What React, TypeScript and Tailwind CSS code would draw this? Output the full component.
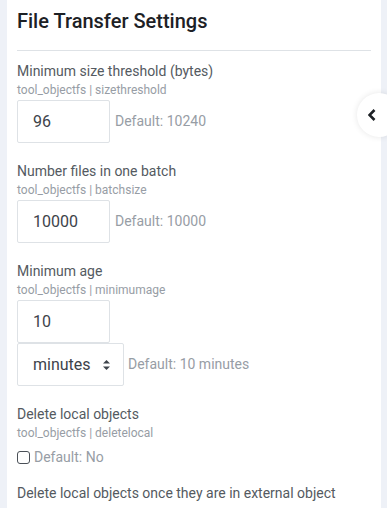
export default function App() {
  return (
    <div className="relative h-[508px] w-full overflow-hidden bg-[#eef1f7] font-['Roboto',sans-serif]">
      <div className="ml-[7px] h-full w-[374px] bg-white px-[10px]">
        <h2 className="pt-[6px] text-[20px] leading-[30px] font-medium text-[#1d2125]">
          File Transfer Settings
        </h2>
        <hr className="mt-[14px] border-t border-[#dee2e6]" />

        <div className="mt-[10px]">
          <div className="text-[14px] leading-[20px] text-[#545a61]">Minimum size threshold (bytes)</div>
          <div className="text-[12px] leading-[18px] text-[#979da5]">tool_objectfs | sizethreshold</div>
          <div className="mt-[1px] flex items-center gap-[5px]">
            <div className="flex h-[43px] w-[93px] items-center rounded-[2px] border border-[#dee2e6] px-[15px] text-[16px] text-[#3d434a]">
              96
            </div>
            <span className="text-[14px] text-[#979da5]">Default: 10240</span>
          </div>
        </div>

        <div className="mt-[18px]">
          <div className="text-[14px] leading-[20px] text-[#545a61]">Number files in one batch</div>
          <div className="text-[12px] leading-[18px] text-[#979da5]">tool_objectfs | batchsize</div>
          <div className="mt-[1px] flex items-center gap-[5px]">
            <div className="flex h-[43px] w-[93px] items-center rounded-[2px] border border-[#dee2e6] px-[15px] text-[16px] text-[#3d434a]">
              10000
            </div>
            <span className="text-[14px] text-[#979da5]">Default: 10000</span>
          </div>
        </div>

        <div className="mt-[18px]">
          <div className="text-[14px] leading-[20px] text-[#545a61]">Minimum age</div>
          <div className="text-[12px] leading-[18px] text-[#979da5]">tool_objectfs | minimumage</div>
          <div className="mt-[1px] flex h-[43px] w-[93px] items-center rounded-[2px] border border-[#dee2e6] px-[15px] text-[16px] text-[#3d434a]">
            10
          </div>
          <div className="flex items-center gap-[4px]">
            <div className="flex h-[43px] w-[107px] items-center justify-between rounded-[2px] border border-[#dee2e6] pr-[13px] pl-[15px] text-[16px] text-[#3d434a]">
              <span>minutes</span>
              <svg width="7" height="10" viewBox="0 0 7 10" className="fill-[#3d434a]">
                <polygon points="3.5,0 7,3.6 0,3.6" />
                <polygon points="0,6.4 7,6.4 3.5,10" />
              </svg>
            </div>
            <span className="text-[14px] text-[#979da5]">Default: 10 minutes</span>
          </div>
        </div>

        <div className="mt-[18px]">
          <div className="text-[14px] leading-[20px] text-[#545a61]">Delete local objects</div>
          <div className="text-[12px] leading-[18px] text-[#979da5]">tool_objectfs | deletelocal</div>
          <div className="mt-[5px] flex h-[20px] items-center gap-[4px]">
            <span className="h-[13px] w-[13px] rounded-[3px] border-[1.5px] border-[#4a5057]" />
            <span className="text-[14px] text-[#979da5]">Default: No</span>
          </div>
        </div>

        <div className="mt-[16px] text-[14px] leading-[20px] text-[#545a61]">
          Delete local objects once they are in external object
        </div>
      </div>

      <button className="absolute top-[93px] left-[357px] flex h-[44px] w-[44px] items-center rounded-full bg-white pl-[11px] shadow-[0_0_6px_rgba(0,0,0,0.1)]">
        <svg width="8" height="12" viewBox="0 0 8 12" fill="none">
          <polyline points="6.5,1 1.5,6 6.5,11" stroke="#1d2125" strokeWidth="2.6" strokeLinejoin="miter" />
        </svg>
      </button>
    </div>
  );
}
